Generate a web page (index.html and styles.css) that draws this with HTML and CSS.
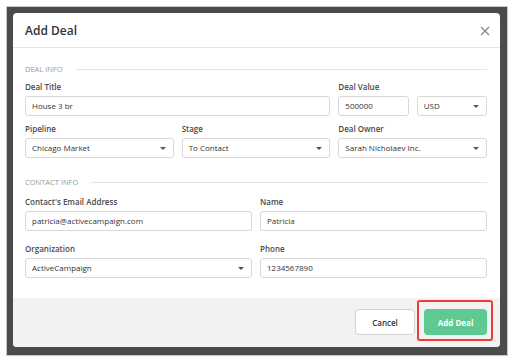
FILE: index.html
```html
<!DOCTYPE html>
<html lang="en">

<head>
    <meta charset="UTF-8">
    <meta name="viewport" content="width=device-width, initial-scale=1.0">
    <title>Add Deal</title>
    <link rel="stylesheet" href="styles.css">
</head>

<body>
<div class="frame">
  <div class="overlay">
    <div class="modal">
      <div class="modal-header">
        <h2 class="modal-title">Add Deal</h2>
        <span class="close">
          <svg width="10" height="10" viewBox="0 0 10 10"><path d="M1 1 L9 9 M9 1 L1 9" stroke="#8a8a8a" stroke-width="1.4" fill="none"/></svg>
        </span>
      </div>

      <div class="modal-body">
        <div class="section-title">DEAL INFO</div>
        <div class="grid three deal-rows">
          <div class="field span2">
            <label>Deal Title</label>
            <div class="input">House 3 br</div>
          </div>
          <div class="field">
            <label>Deal Value</label>
            <div class="pair">
              <div class="input">500000</div>
              <div class="input select">USD</div>
            </div>
          </div>
          <div class="field">
            <label>Pipeline</label>
            <div class="input select">Chicago Market</div>
          </div>
          <div class="field">
            <label>Stage</label>
            <div class="input select">To Contact</div>
          </div>
          <div class="field">
            <label>Deal Owner</label>
            <div class="input select">Sarah Nicholaev Inc.</div>
          </div>
        </div>

        <div class="section-title contact">CONTACT INFO</div>
        <div class="grid two contact-rows">
          <div class="field">
            <label>Contact's Email Address</label>
            <div class="input">patricia@activecampaign.com</div>
          </div>
          <div class="field">
            <label>Name</label>
            <div class="input">Patricia</div>
          </div>
          <div class="field">
            <label>Organization</label>
            <div class="input select">ActiveCampaign</div>
          </div>
          <div class="field">
            <label>Phone</label>
            <div class="input">1234567890</div>
          </div>
        </div>
      </div>

      <div class="modal-footer">
        <button class="btn btn-cancel" type="button">Cancel</button>
        <button class="btn btn-add" type="button">Add Deal<span class="highlight"></span></button>
      </div>
    </div>
  </div>
</div>
</body>

</html>
```

FILE: styles.css
```css
body {
    margin: 0;
    background: #fff;
    font-family: "Open Sans", sans-serif;
    color: #333;
}

.frame {
    margin: 6px;
    width: 502px;
    height: 350px;
    box-sizing: border-box;
    border: 1px solid #c6c6c6;
}

.overlay {
    height: 100%;
    box-sizing: border-box;
    padding: 6px 7px 8px 6px;
    background: #4b4b4b;
}

.modal {
    height: 100%;
    display: flex;
    flex-direction: column;
    background: #fff;
    border-radius: 4px;
    overflow: hidden;
}

.modal-header {
    height: 35px;
    flex: none;
    box-sizing: border-box;
    display: flex;
    align-items: center;
    justify-content: space-between;
    padding: 0 10px 0 12px;
    border-bottom: 1px solid #e4e4e4;
}

.modal-title {
    margin: 0;
    font-size: 12px;
    font-weight: 600;
    color: #333;
}

.close {
    display: flex;
    margin-top: 1px;
}

.modal-body {
    flex: 1;
    padding: 15px 13px 0 12px;
}

.section-title {
    display: flex;
    align-items: center;
    gap: 13px;
    font-size: 7.5px;
    line-height: 12px;
    color: #9a9a9a;
    margin-bottom: 6px;
}

.section-title::after {
    content: "";
    flex: 1;
    height: 1px;
    background: #e4e4e4;
}

.section-title.contact {
    margin-top: 18px;
    margin-bottom: 8px;
}

.grid {
    display: grid;
    column-gap: 8px;
}

.three {
    grid-template-columns: repeat(3, 1fr);
    row-gap: 7px;
}

.two {
    grid-template-columns: repeat(2, 1fr);
    row-gap: 12px;
}

.span2 {
    grid-column: span 2;
}

.field label {
    display: block;
    font-size: 8px;
    font-weight: 600;
    line-height: 12px;
    margin-bottom: 3px;
    color: #4a4a4a;
}

.pair {
    display: grid;
    grid-template-columns: 1fr 1fr;
    gap: 8px;
}

.input {
    position: relative;
    height: 20px;
    box-sizing: border-box;
    border: 1px solid #d8d8d8;
    border-radius: 3px;
    padding: 0 6px;
    font-size: 8px;
    line-height: 18px;
    color: #333;
    white-space: nowrap;
}

.select::after {
    content: "";
    position: absolute;
    right: 7px;
    top: 8px;
    border-left: 3px solid transparent;
    border-right: 3px solid transparent;
    border-top: 3px solid #555;
}

.modal-footer {
    height: 49px;
    flex: none;
    box-sizing: border-box;
    display: flex;
    align-items: center;
    justify-content: flex-end;
    gap: 9px;
    padding: 0 13px 1px 0;
    background: #f2f2f2;
}

.btn {
    height: 26px;
    border-radius: 4px;
    font-family: "Open Sans", sans-serif;
    font-size: 8px;
    font-weight: 600;
    cursor: pointer;
    padding: 0;
}

.btn-cancel {
    width: 60px;
    background: #fff;
    border: 1px solid #d2d2d2;
    color: #333;
}

.btn-add {
    position: relative;
    width: 63px;
    background: #5ec993;
    border: none;
    color: #fff;
    font-weight: 700;
}

.highlight {
    position: absolute;
    left: -7px;
    right: -6px;
    top: -9px;
    bottom: -6px;
    border: 2px solid #ea3d3a;
    border-radius: 3px;
}
```
